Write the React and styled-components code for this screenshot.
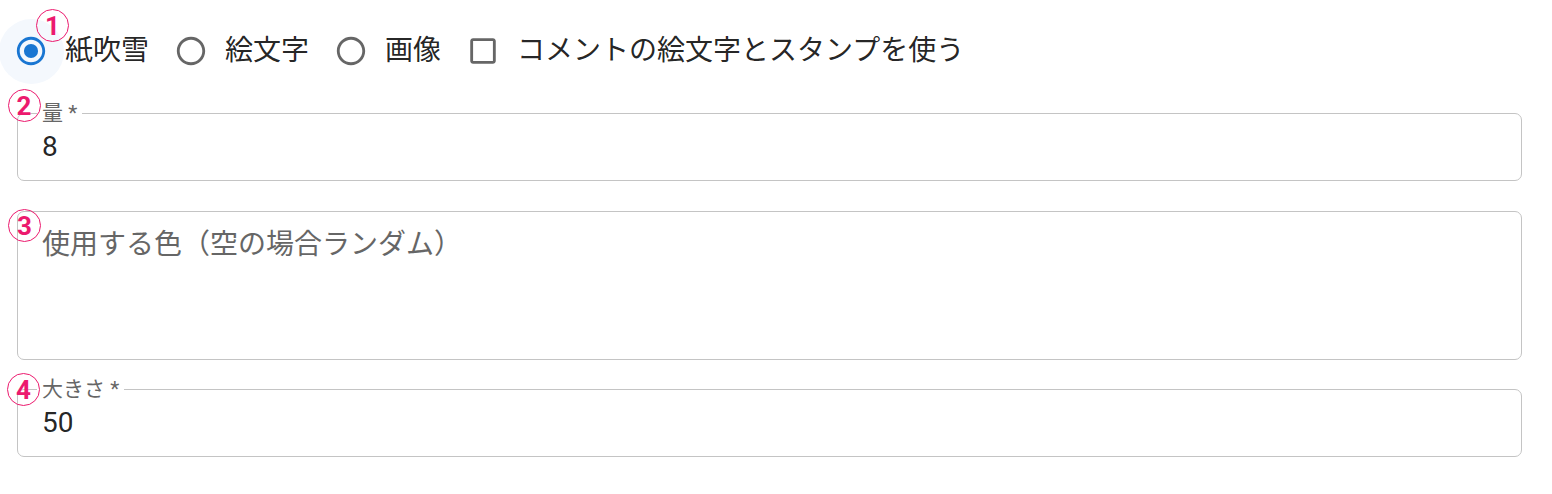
import React from "react";
import styled, { createGlobalStyle } from "styled-components";

const GlobalStyle = createGlobalStyle`
  body {
    margin: 0;
    background: #fff;
    font-family: Roboto, "Noto Sans CJK JP", sans-serif;
    color: rgba(0, 0, 0, 0.87);
  }
`;

const fontStack = `Roboto, "Noto Sans CJK JP", sans-serif`;
const pink = "#ec1a6e";

const Marker = ({ n, left, top }) => (
  <MarkerCircle style={{ left, top }}>{n}</MarkerCircle>
);

const RadioIcon = ({ checked }) => (
  <svg viewBox="0 0 24 24" width="34" height="34" fill="currentColor">
    <path d="M12 2C6.48 2 2 6.48 2 12s4.48 10 10 10 10-4.48 10-10S17.52 2 12 2zm0 18c-4.42 0-8-3.58-8-8s3.58-8 8-8 8 3.58 8 8-3.58 8-8 8z" />
    {checked && <circle cx="12" cy="12" r="5" />}
  </svg>
);

const CheckboxIcon = () => (
  <svg viewBox="0 0 24 24" width="34" height="34" fill="currentColor">
    <path d="M19 5v14H5V5h14m0-2H5c-1.11 0-2 .9-2 2v14c0 1.1.89 2 2 2h14c1.1 0 2-.9 2-2V5c0-1.1-.9-2-2-2z" />
  </svg>
);

const options = [
  { label: "紙吹雪", checked: true },
  { label: "絵文字", checked: false },
  { label: "画像", checked: false },
];

const App = () => {
  return (
    <>
      <GlobalStyle />
      <Page>
        <OptionRow>
          <Marker n="1" left={19} top={-22} />
          {options.map((o, i) => (
            <Option key={o.label} first={i === 0}>
              <Control checked={o.checked} focused={i === 0}>
                <RadioIcon checked={o.checked} />
              </Control>
              <OptionLabel>{o.label}</OptionLabel>
            </Option>
          ))}
          <Option>
            <Control>
              <CheckboxIcon />
            </Control>
            <OptionLabel>コメントの絵文字とスタンプを使う</OptionLabel>
          </Option>
        </OptionRow>

        <Field>
          <Marker n="2" left={-10.5} top={-25} />
          <FloatLabel>量 *</FloatLabel>
          <Input defaultValue="8" />
        </Field>

        <Field gap={30}>
          <Marker n="3" left={-10} top={-3} />
          <TextArea rows={3} placeholder="使用する色（空の場合ランダム）" />
        </Field>

        <Field gap={29}>
          <Marker n="4" left={-11} top={-17} />
          <FloatLabel>大きさ *</FloatLabel>
          <Input defaultValue="50" />
        </Field>
      </Page>
    </>
  );
};

const Page = styled.div`
  padding: 31px 30px 20px 17px;
  font-family: ${fontStack};
`;

const MarkerCircle = styled.div`
  position: absolute;
  z-index: 3;
  width: 33px;
  height: 33px;
  box-sizing: border-box;
  border: 1.8px solid ${pink};
  border-radius: 50%;
  display: flex;
  align-items: center;
  justify-content: center;
  color: ${pink};
  font-family: Roboto, sans-serif;
  font-weight: 700;
  font-size: 26px;
  line-height: 1;
  pointer-events: none;
`;

const OptionRow = styled.div`
  position: relative;
  display: flex;
  align-items: center;
  height: 40px;
`;

const Option = styled.label`
  display: flex;
  align-items: center;
  margin-left: ${(p) => (p.first ? "-3px" : "25px")};
`;

const Control = styled.span`
  position: relative;
  width: 34px;
  height: 34px;
  margin-right: 17px;
  display: flex;
  color: ${(p) => (p.checked ? "#1976d2" : "#666666")};

  &::before {
    content: "";
    display: ${(p) => (p.focused ? "block" : "none")};
    position: absolute;
    left: 50%;
    top: 50%;
    width: 65px;
    height: 65px;
    margin: -32.5px 0 0 -32.5px;
    border-radius: 50%;
    background: #f4f8fd;
  }

  svg {
    position: relative;
  }
`;

const OptionLabel = styled.span`
  font-size: 28px;
  line-height: 40px;
  color: rgba(0, 0, 0, 0.87);
  white-space: nowrap;
`;

const Field = styled.div`
  position: relative;
  margin-top: ${(p) => p.gap || 42}px;
  border: 1px solid #c4c4c4;
  border-radius: 7px;
  padding: 13px 24px;
`;

const FloatLabel = styled.label`
  position: absolute;
  left: 19px;
  top: -13px;
  padding: 0 5px;
  background: #fff;
  font-size: 21px;
  line-height: 24px;
  color: #666666;
  white-space: pre;
`;

const Input = styled.input`
  display: block;
  width: 100%;
  box-sizing: border-box;
  border: 0;
  outline: 0;
  padding: 0;
  margin: 0;
  height: 40px;
  font-family: ${fontStack};
  font-size: 28px;
  line-height: 40px;
  color: rgba(0, 0, 0, 0.87);
  background: transparent;
`;

const TextArea = styled.textarea`
  display: block;
  width: 100%;
  box-sizing: border-box;
  border: 0;
  outline: 0;
  padding: 0;
  margin: 0 0 1px;
  resize: none;
  height: 120px;
  font-family: ${fontStack};
  font-size: 28px;
  line-height: 40px;
  color: rgba(0, 0, 0, 0.87);
  background: transparent;

  &::placeholder {
    color: #666666;
    opacity: 1;
  }
`;

export default App;
